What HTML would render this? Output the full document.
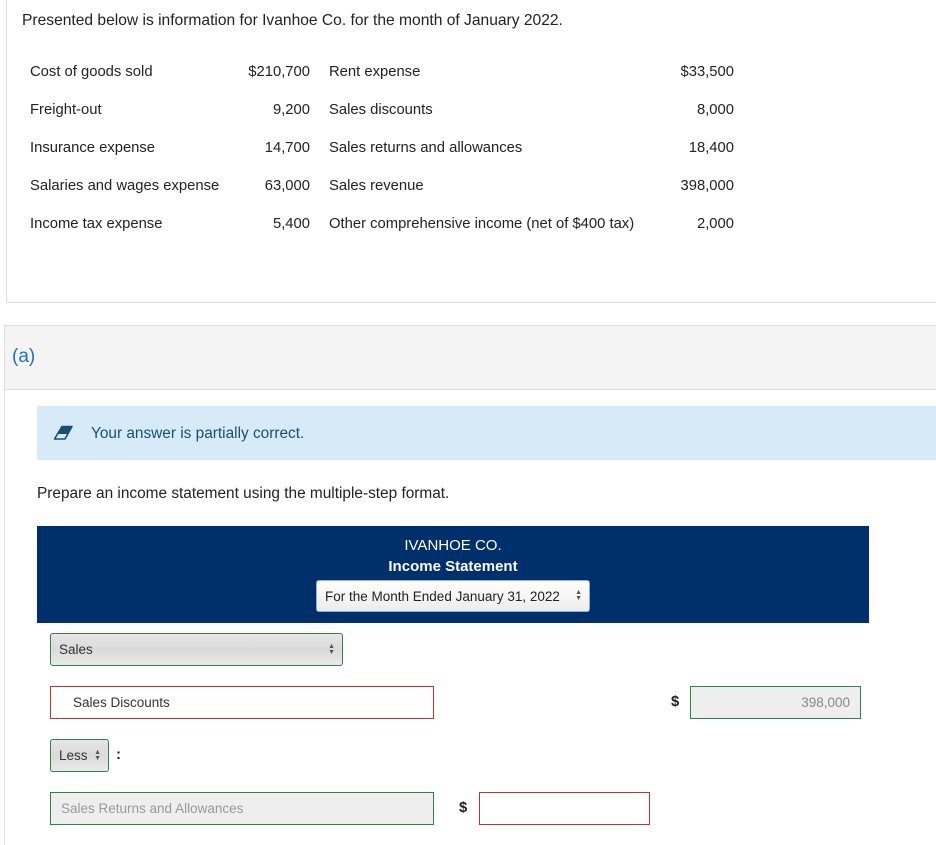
<!DOCTYPE html>
<html><head><style>
*{margin:0;padding:0;box-sizing:border-box}
body{width:936px;height:828px;overflow:hidden;background:#fff;font-family:"Liberation Sans",sans-serif;color:#222;position:relative;font-size:14.8px}
.a{position:absolute;white-space:nowrap}
.r{text-align:right}
.sel{position:absolute;border:1px solid #2e8540;border-radius:3px;background:linear-gradient(#e6e6e6,#dadada 50%,#e9e9e9);font-size:13.5px;color:#333;padding-left:8px;display:flex;align-items:center}
.arr{position:absolute;right:7px;top:50%;transform:translateY(-50%);font-size:7px;line-height:6px;color:#555;text-align:center}
.box{position:absolute;border:1px solid #c9302c;font-size:13.5px;display:flex;align-items:center}
</style></head><body>
<div class="a" style="left:6px;top:0;width:940px;height:303px;border-left:1px solid #ddd;border-bottom:1px solid #ddd"></div>
<div class="a" style="left:22px;top:12px;font-size:15.6px">Presented below is information for Ivanhoe Co. for the month of January 2022.</div>

<div class="a" style="left:30px;top:64px">Cost of goods sold</div>
<div class="a r" style="left:200px;top:64px;width:110px">$210,700</div>
<div class="a" style="left:329px;top:64px">Rent expense</div>
<div class="a r" style="left:640px;top:64px;width:94px">$33,500</div>

<div class="a" style="left:30px;top:102px">Freight-out</div>
<div class="a r" style="left:200px;top:102px;width:110px">9,200</div>
<div class="a" style="left:329px;top:102px">Sales discounts</div>
<div class="a r" style="left:640px;top:102px;width:94px">8,000</div>

<div class="a" style="left:30px;top:140px">Insurance expense</div>
<div class="a r" style="left:200px;top:140px;width:110px">14,700</div>
<div class="a" style="left:329px;top:140px">Sales returns and allowances</div>
<div class="a r" style="left:640px;top:140px;width:94px">18,400</div>

<div class="a" style="left:30px;top:178px">Salaries and wages expense</div>
<div class="a r" style="left:200px;top:178px;width:110px">63,000</div>
<div class="a" style="left:329px;top:178px">Sales revenue</div>
<div class="a r" style="left:640px;top:178px;width:94px">398,000</div>

<div class="a" style="left:30px;top:216px">Income tax expense</div>
<div class="a r" style="left:200px;top:216px;width:110px">5,400</div>
<div class="a" style="left:329px;top:216px">Other comprehensive income (net of $400 tax)</div>
<div class="a r" style="left:640px;top:216px;width:94px">2,000</div>

<div class="a" style="left:4px;top:325px;width:940px;height:520px;border-left:1px solid #ddd;border-top:1px solid #ddd"></div>
<div class="a" style="left:5px;top:326px;width:940px;height:64px;background:#f4f4f4;border-bottom:1px solid #ddd"></div>
<div class="a" style="left:12px;top:346px;font-size:19px;color:#1a73c8">(a)</div>

<div class="a" style="left:37px;top:406px;width:900px;height:54px;background:#d6ebf7"></div>
<svg class="a" style="left:52px;top:425px" width="24" height="16" viewBox="0 0 24 16"><path d="M10 1.5h10l-7 12.5H2.5z" fill="none" stroke="#1a4f73" stroke-width="1.6" stroke-linejoin="round"/><path d="M10 1.5h10l-4.2 7.5H5.8z" fill="#1a4f73"/></svg>
<div class="a" style="left:91px;top:425px;color:#1a4f73;font-size:15.4px">Your answer is partially correct.</div>

<div class="a" style="left:37px;top:485px;font-size:15.4px">Prepare an income statement using the multiple-step format.</div>

<div class="a" style="left:37px;top:526px;width:832px;height:97px;background:#00306b"></div>
<div class="a" style="left:37px;top:537px;width:832px;text-align:center;color:#fff;font-size:15px">IVANHOE CO.</div>
<div class="a" style="left:37px;top:558px;width:832px;text-align:center;color:#fff;font-size:15px;font-weight:bold">Income Statement</div>
<div class="a" style="left:316px;top:580px;width:274px;height:32px;background:linear-gradient(#fff,#ececec);border:1px solid #8ab4e0;border-radius:3px;font-size:13.5px;padding:8px 0 0 8px;color:#222">For the Month Ended January 31, 2022<span class="arr">▲<br>▼</span></div>

<div class="sel" style="left:50px;top:633px;width:293px;height:33px">Sales<span class="arr">▲<br>▼</span></div>
<div class="box" style="left:50px;top:686px;width:384px;height:33px;padding-left:22px;color:#333">Sales Discounts</div>
<div class="a" style="left:671px;top:694px;font-weight:bold">$</div>
<div class="box" style="left:690px;top:686px;width:171px;height:33px;border-color:#2e8540;background:#eee;justify-content:flex-end;padding-right:10px;color:#888">398,000</div>

<div class="sel" style="left:50px;top:739px;width:59px;height:33px">Less<span class="arr">▲<br>▼</span></div>
<div class="a" style="left:116px;top:747px;font-weight:bold">:</div>

<div class="box" style="left:50px;top:792px;width:384px;height:33px;border-color:#2e8540;background:#eee;padding-left:10px;color:#999">Sales Returns and Allowances</div>
<div class="a" style="left:459px;top:800px;font-weight:bold">$</div>
<div class="box" style="left:479px;top:792px;width:171px;height:33px"></div>
</body></html>
